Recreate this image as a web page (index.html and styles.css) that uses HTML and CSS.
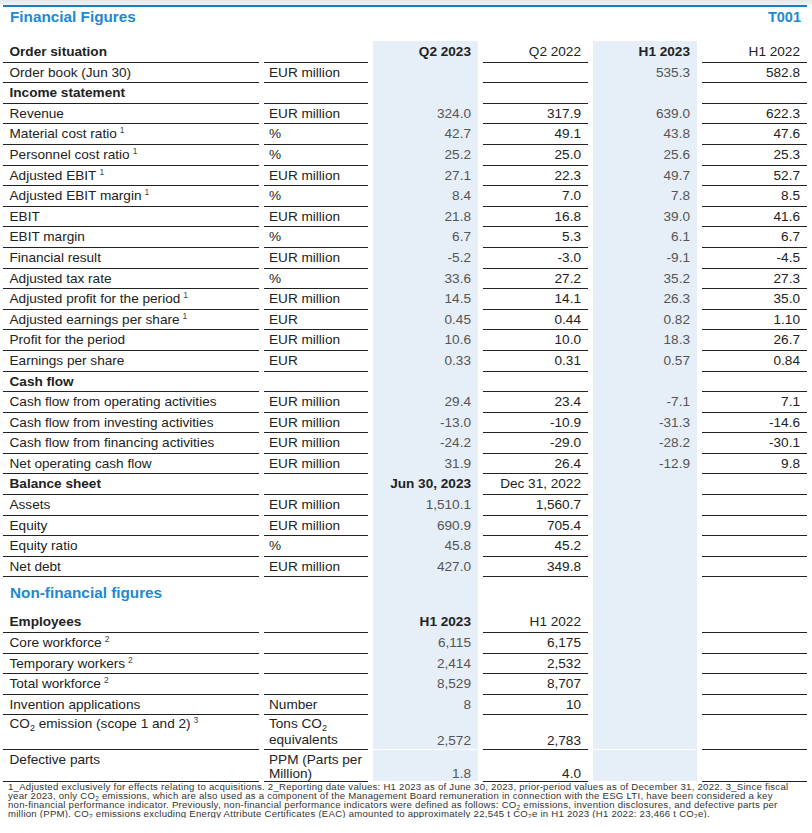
FILE: index.html
```html
<!DOCTYPE html>
<html lang="en">
<head>
<meta charset="utf-8">
<title>Financial Figures T001</title>
<link rel="stylesheet" href="styles.css">
</head>
<body>
<div class="topbar"></div>
<section class="report">
  <header class="report-head">
    <h1 class="report-title">Financial Figures</h1>
    <span class="report-code">T001</span>
  </header>

  <div class="kpi-table">
    <div class="row head">
      <div class="l">Order situation</div><div class="u"></div>
      <div class="v s b">Q2 2023</div><div class="v">Q2 2022</div>
      <div class="v s b">H1 2023</div><div class="v">H1 2022</div>
    </div>
    <div class="row">
      <div class="l">Order book (Jun 30)</div><div class="u">EUR million</div>
      <div class="v s"></div><div class="v"></div>
      <div class="v s">535.3</div><div class="v">582.8</div>
    </div>
    <div class="row head">
      <div class="l">Income statement</div><div class="u"></div>
      <div class="v s"></div><div class="v"></div>
      <div class="v s"></div><div class="v"></div>
    </div>
    <div class="row">
      <div class="l">Revenue</div><div class="u">EUR million</div>
      <div class="v s">324.0</div><div class="v">317.9</div>
      <div class="v s">639.0</div><div class="v">622.3</div>
    </div>
    <div class="row">
      <div class="l">Material cost ratio<sup class="fn">1</sup></div><div class="u">%</div>
      <div class="v s">42.7</div><div class="v">49.1</div>
      <div class="v s">43.8</div><div class="v">47.6</div>
    </div>
    <div class="row">
      <div class="l">Personnel cost ratio<sup class="fn">1</sup></div><div class="u">%</div>
      <div class="v s">25.2</div><div class="v">25.0</div>
      <div class="v s">25.6</div><div class="v">25.3</div>
    </div>
    <div class="row">
      <div class="l">Adjusted EBIT<sup class="fn">1</sup></div><div class="u">EUR million</div>
      <div class="v s">27.1</div><div class="v">22.3</div>
      <div class="v s">49.7</div><div class="v">52.7</div>
    </div>
    <div class="row">
      <div class="l">Adjusted EBIT margin<sup class="fn">1</sup></div><div class="u">%</div>
      <div class="v s">8.4</div><div class="v">7.0</div>
      <div class="v s">7.8</div><div class="v">8.5</div>
    </div>
    <div class="row">
      <div class="l">EBIT</div><div class="u">EUR million</div>
      <div class="v s">21.8</div><div class="v">16.8</div>
      <div class="v s">39.0</div><div class="v">41.6</div>
    </div>
    <div class="row">
      <div class="l">EBIT margin</div><div class="u">%</div>
      <div class="v s">6.7</div><div class="v">5.3</div>
      <div class="v s">6.1</div><div class="v">6.7</div>
    </div>
    <div class="row">
      <div class="l">Financial result</div><div class="u">EUR million</div>
      <div class="v s">-5.2</div><div class="v">-3.0</div>
      <div class="v s">-9.1</div><div class="v">-4.5</div>
    </div>
    <div class="row">
      <div class="l">Adjusted tax rate</div><div class="u">%</div>
      <div class="v s">33.6</div><div class="v">27.2</div>
      <div class="v s">35.2</div><div class="v">27.3</div>
    </div>
    <div class="row">
      <div class="l">Adjusted profit for the period<sup class="fn">1</sup></div><div class="u">EUR million</div>
      <div class="v s">14.5</div><div class="v">14.1</div>
      <div class="v s">26.3</div><div class="v">35.0</div>
    </div>
    <div class="row">
      <div class="l">Adjusted earnings per share<sup class="fn">1</sup></div><div class="u">EUR</div>
      <div class="v s">0.45</div><div class="v">0.44</div>
      <div class="v s">0.82</div><div class="v">1.10</div>
    </div>
    <div class="row">
      <div class="l">Profit for the period</div><div class="u">EUR million</div>
      <div class="v s">10.6</div><div class="v">10.0</div>
      <div class="v s">18.3</div><div class="v">26.7</div>
    </div>
    <div class="row">
      <div class="l">Earnings per share</div><div class="u">EUR</div>
      <div class="v s">0.33</div><div class="v">0.31</div>
      <div class="v s">0.57</div><div class="v">0.84</div>
    </div>
    <div class="row head">
      <div class="l">Cash flow</div><div class="u"></div>
      <div class="v s"></div><div class="v"></div>
      <div class="v s"></div><div class="v"></div>
    </div>
    <div class="row">
      <div class="l">Cash flow from operating activities</div><div class="u">EUR million</div>
      <div class="v s">29.4</div><div class="v">23.4</div>
      <div class="v s">-7.1</div><div class="v">7.1</div>
    </div>
    <div class="row">
      <div class="l">Cash flow from investing activities</div><div class="u">EUR million</div>
      <div class="v s">-13.0</div><div class="v">-10.9</div>
      <div class="v s">-31.3</div><div class="v">-14.6</div>
    </div>
    <div class="row">
      <div class="l">Cash flow from financing activities</div><div class="u">EUR million</div>
      <div class="v s">-24.2</div><div class="v">-29.0</div>
      <div class="v s">-28.2</div><div class="v">-30.1</div>
    </div>
    <div class="row">
      <div class="l">Net operating cash flow</div><div class="u">EUR million</div>
      <div class="v s">31.9</div><div class="v">26.4</div>
      <div class="v s">-12.9</div><div class="v">9.8</div>
    </div>
    <div class="row head">
      <div class="l">Balance sheet</div><div class="u"></div>
      <div class="v s b">Jun 30, 2023</div><div class="v">Dec 31, 2022</div>
      <div class="v s"></div><div class="v"></div>
    </div>
    <div class="row">
      <div class="l">Assets</div><div class="u">EUR million</div>
      <div class="v s">1,510.1</div><div class="v">1,560.7</div>
      <div class="v s"></div><div class="v"></div>
    </div>
    <div class="row">
      <div class="l">Equity</div><div class="u">EUR million</div>
      <div class="v s">690.9</div><div class="v">705.4</div>
      <div class="v s"></div><div class="v"></div>
    </div>
    <div class="row">
      <div class="l">Equity ratio</div><div class="u">%</div>
      <div class="v s">45.8</div><div class="v">45.2</div>
      <div class="v s"></div><div class="v"></div>
    </div>
    <div class="row">
      <div class="l">Net debt</div><div class="u">EUR million</div>
      <div class="v s">427.0</div><div class="v">349.8</div>
      <div class="v s"></div><div class="v"></div>
    </div>

    <div class="row section">
      <h2 class="section-title">Non-financial figures</h2>
      <div class="s"></div><div></div>
      <div class="s"></div><div></div>
    </div>
    <div class="row head">
      <div class="l">Employees</div><div class="u"></div>
      <div class="v s b">H1 2023</div><div class="v">H1 2022</div>
      <div class="v s"></div><div class="v"></div>
    </div>
    <div class="row">
      <div class="l">Core workforce<sup class="fn">2</sup></div><div class="u"></div>
      <div class="v s">6,115</div><div class="v">6,175</div>
      <div class="v s"></div><div class="v"></div>
    </div>
    <div class="row">
      <div class="l">Temporary workers<sup class="fn">2</sup></div><div class="u"></div>
      <div class="v s">2,414</div><div class="v">2,532</div>
      <div class="v s"></div><div class="v"></div>
    </div>
    <div class="row">
      <div class="l">Total workforce<sup class="fn">2</sup></div><div class="u"></div>
      <div class="v s">8,529</div><div class="v">8,707</div>
      <div class="v s"></div><div class="v"></div>
    </div>
    <div class="row">
      <div class="l">Invention applications</div><div class="u">Number</div>
      <div class="v s">8</div><div class="v">10</div>
      <div class="v s"></div><div class="v"></div>
    </div>
    <div class="row multi co2">
      <div class="l">CO<sub>2</sub> emission (scope 1 and 2)<sup class="fn">3</sup></div>
      <div class="u">Tons CO<sub>2</sub><br>equivalents</div>
      <div class="v s">2,572</div><div class="v">2,783</div>
      <div class="v s"></div><div class="v"></div>
    </div>
    <div class="row multi ppm">
      <div class="l">Defective parts</div>
      <div class="u">PPM (Parts per<br>Million)</div>
      <div class="v s">1.8</div><div class="v">4.0</div>
      <div class="v s"></div><div class="v"></div>
    </div>
  </div>

  <p class="notes">1_Adjusted exclusively for effects relating to acquisitions. 2_Reporting date values: H1 2023 as of June 30, 2023, prior-period values as of December 31, 2022. 3_Since fiscal<br>year 2023, only CO<sub>2</sub> emissions, which are also used as a component of the Management Board remuneration in connection with the ESG LTI, have been considered a key<br>non-financial performance indicator. Previously, non-financial performance indicators were defined as follows: CO<sub>2</sub> emissions, invention disclosures, and defective parts per<br>million (PPM). CO<sub>2</sub> emissions excluding Energy Attribute Certificates (EAC) amounted to approximately 22,545 t CO<sub>2</sub>e in H1 2023 (H1 2022: 23,466 t CO<sub>2</sub>e).</p>
</section>
</body>
</html>
```

FILE: styles.css
```css
html, body {
  margin: 0;
  padding: 0;
  background: #ffffff;
}

body {
  font-family: "Liberation Sans", Arial, sans-serif;
  color: #222222;
}

.topbar {
  height: 5px;
  background: linear-gradient(#e6e6e6, #f3f3f3);
}

.report {
  margin-left: 3px;
  width: 804px;
  border-top: 2px solid #1b7dc2;
}

.report-head {
  display: flex;
  justify-content: space-between;
  align-items: baseline;
  padding: 1px 6px 15px 7px;
  line-height: 18px;
  height: 34px;
  box-sizing: border-box;
}

.report-title {
  margin: 0;
  font-size: 15.3px;
  font-weight: bold;
  color: #2089d3;
}

.report-code {
  font-size: 14.5px;
  font-weight: bold;
  color: #2089d3;
}

.kpi-table {
  font-size: 13.6px;
}

.row {
  display: grid;
  grid-template-columns: 256px 104px 105px 105px 104px 105px;
  column-gap: 5px;
  height: 20.6px;
}

.row > * {
  display: block;
  box-sizing: border-box;
  border-bottom: 1px solid #222222;
  padding: 1px 7px 0;
  line-height: 19.6px;
  white-space: nowrap;
  overflow: visible;
  color: #222222;
}

.row > .l {
  padding-left: 6.5px;
}

.row > .u {
  padding-left: 5px;
  padding-right: 0;
}

.row > .v {
  text-align: right;
}

.row > .s {
  background: #e6eef7;
  border-bottom-color: #ffffff;
  color: #555555;
}

.row > .b {
  font-weight: bold;
  color: #222222;
}

.row.head > .l {
  font-weight: bold;
}

.fn {
  font-size: 8.5px;
  line-height: 0;
  vertical-align: 5px;
  margin-left: 3px;
  color: #444444;
}

sub {
  font-size: 9px;
  line-height: 0;
  vertical-align: -3px;
}

.row.section {
  height: 35px;
}

.row.section > * {
  border-bottom: 0;
}

.section-title {
  grid-column: span 2;
  margin: 0;
  padding: 8px 0 0 7px;
  line-height: 18px;
  font-size: 15.3px;
  font-weight: bold;
  color: #2089d3;
}

.row.multi > .l,
.row.multi > .u {
  line-height: 16px;
  padding-top: 2px;
}

.row.multi > .v {
  display: flex;
  align-items: flex-end;
  justify-content: flex-end;
  line-height: 16px;
  padding-top: 0;
  padding-bottom: 0;
}

.row.co2 {
  height: 36px;
}

.row.ppm {
  height: 30px;
}

.row.ppm > .l,
.row.ppm > .u {
  line-height: 14px;
  padding-top: 3px;
}

.row.ppm > .v {
  line-height: 14px;
  padding-bottom: 0;
}

.notes {
  margin: 0;
  padding: 2px 6px 0 5px;
  font-size: 9.6px;
  letter-spacing: 0.25px;
  line-height: 9px;
  color: #333333;
  white-space: nowrap;
}

.notes sub {
  font-size: 6.5px;
  vertical-align: -1.5px;
}
```
